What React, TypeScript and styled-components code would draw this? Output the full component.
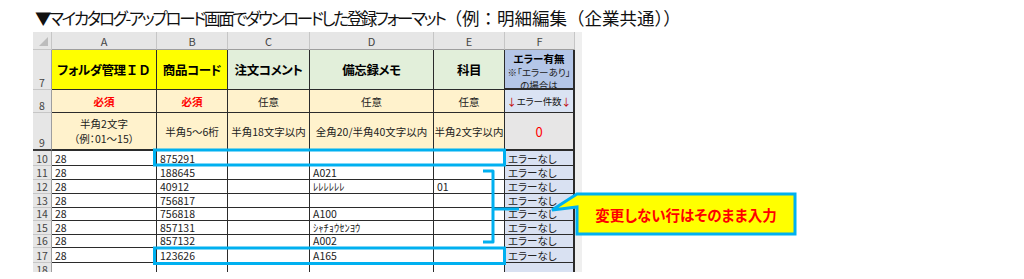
import styled, { createGlobalStyle } from "styled-components";

const GlobalStyle = createGlobalStyle`
  body {
    margin: 0;
    background: #ffffff;
    font-family: "Noto Sans CJK JP", "Noto Sans", sans-serif;
    font-feature-settings: "palt";
  }
`;

type Row = {
  n: number;
  a?: string;
  b?: string;
  c?: string;
  d?: string;
  e?: string;
  f?: string;
  h: number;
};

const rows: Row[] = [
  { n: 10, a: "28", b: "875291", f: "エラーなし", h: 15 },
  { n: 11, a: "28", b: "188645", d: "A021", f: "エラーなし", h: 14 },
  { n: 12, a: "28", b: "40912", d: "ﾚﾚﾚﾚﾚﾚ", e: "01", f: "エラーなし", h: 14 },
  { n: 13, a: "28", b: "756817", f: "エラーなし", h: 14 },
  { n: 14, a: "28", b: "756818", d: "A100", f: "エラーなし", h: 13 },
  { n: 15, a: "28", b: "857131", d: "ｼｬﾁｮｳｾﾝﾖｳ", f: "エラーなし", h: 14 },
  { n: 16, a: "28", b: "857132", d: "A002", f: "エラーなし", h: 13 },
  { n: 17, a: "28", b: "123626", d: "A165", f: "エラーなし", h: 15 },
  { n: 18, h: 14 },
];

const App: React.FC = () => {
  return (
    <>
      <GlobalStyle />
      <Page>
        <Title>
          <Kana>▼マイカタログ-アップロード画面でダウンロードした登録フォーマット</Kana>
          <Paren>（例：明細編集（企業共通））</Paren>
        </Title>
        <Sheet>
          <Grid $rows={rows.map((r) => r.h + "px").join(" ")}>
            <Corner>
              <CornerMark />
            </Corner>
            {["A", "B", "C", "D", "E", "F"].map((c) => (
              <ColHead key={c}>{c}</ColHead>
            ))}

            <RowHead>7</RowHead>
            <TitleCell $bg="#ffff00">
              フォルダ管理<Wide>ＩＤ</Wide>
            </TitleCell>
            <TitleCell $bg="#ffff00">商品コード</TitleCell>
            <TitleCell $bg="#e2efda">注文コメント</TitleCell>
            <TitleCell $bg="#e2efda">備忘録メモ</TitleCell>
            <TitleCell $bg="#e2efda">科目</TitleCell>
            <ErrorHead>
              <b>エラー有無</b>
              <span>※「エラーあり」</span>
              <span>の場合は</span>
            </ErrorHead>

            <RowHead>8</RowHead>
            <RuleCell $red>必須</RuleCell>
            <RuleCell $red>必須</RuleCell>
            <RuleCell>任意</RuleCell>
            <RuleCell>任意</RuleCell>
            <RuleCell>任意</RuleCell>
            <CountHead>
              <Arrow>↓</Arrow>エラー件数<Arrow>↓</Arrow>
            </CountHead>

            <RowHead $thick>9</RowHead>
            <NoteCell>
              半角2文字
              <br />
              （例：01～15）
            </NoteCell>
            <NoteCell>半角5～6桁</NoteCell>
            <NoteCell>半角18文字以内</NoteCell>
            <NoteCell>全角20/半角40文字以内</NoteCell>
            <NoteCell>半角2文字以内</NoteCell>
            <CountCell>0</CountCell>

            {rows.map((r) => (
              <Line key={r.n}>
                <RowHead>{r.n}</RowHead>
                <DataCell>{r.a}</DataCell>
                <DataCell>{r.b}</DataCell>
                <DataCell>{r.c}</DataCell>
                <DataCell>{r.d}</DataCell>
                <DataCell>{r.e}</DataCell>
                <StatusCell>{r.f}</StatusCell>
              </Line>
            ))}
          </Grid>
        </Sheet>

        <Overlay width="1024" height="279" viewBox="0 0 1024 279">
          <g fill="none" stroke="#00b0f0" strokeWidth="3">
            <rect x="154.5" y="150" width="350" height="15" />
            <rect x="154.5" y="248" width="350" height="15.5" />
            <path d="M483 171 H493 V242 H483" strokeLinejoin="round" />
            <path d="M493 209 H519" />
          </g>
          <path
            d="M577 194 H795 V234 H577 V207 L552 210 Z"
            fill="#ffff00"
            stroke="#00b0f0"
            strokeWidth="3"
            strokeLinejoin="miter"
          />
        </Overlay>
        <Callout>変更しない行はそのまま入力</Callout>
      </Page>
    </>
  );
};

export default App;

const Page = styled.div`
  position: relative;
  width: 1024px;
  height: 279px;
  overflow: hidden;
  padding-left: 33px;
  box-sizing: border-box;
`;

const Title = styled.h1`
  margin: 0;
  height: 32px;
  padding: 5px 0 0 2px;
  box-sizing: border-box;
  font-size: 16.5px;
  font-weight: 400;
  line-height: 25px;
  color: #111;
  white-space: nowrap;
`;

const Kana = styled.span`
  letter-spacing: -2.3px;
`;

const Wide = styled.span`
  font-feature-settings: normal;
  letter-spacing: 0;
`;

const Paren = styled(Wide)`
  font-size: 17.5px;
`;

const Sheet = styled.div`
  width: 549px;
  height: 240px;
  background: #efefef;
  overflow: hidden;
`;

const Grid = styled.div<{ $rows: string }>`
  display: grid;
  grid-template-columns: 19px 105px 71px 82px 124px 71px 70px;
  grid-template-rows: 18px 40px 23px 38px ${(p) => p.$rows};
  width: 542px;
  font-size: 10.5px;
  color: #111;
`;

const Line = styled.div`
  display: contents;
`;

const Corner = styled.div`
  position: relative;
  background: #e6e6e6;
  border-right: 1px solid #c6c6c6;
  border-bottom: 1px solid #c6c6c6;
`;

const CornerMark = styled.div`
  position: absolute;
  right: 3px;
  bottom: 3px;
  width: 0;
  height: 0;
  border-left: 9px solid transparent;
  border-bottom: 9px solid #bcbcbc;
`;

const ColHead = styled.div`
  display: flex;
  align-items: center;
  justify-content: center;
  background: #e6e6e6;
  border-right: 1px solid #c6c6c6;
  border-bottom: 1px solid #9e9e9e;
  color: #444;
  font-size: 11px;
`;

const RowHead = styled.div<{ $thick?: boolean }>`
  display: flex;
  align-items: flex-end;
  justify-content: center;
  overflow: hidden;
  background: #e6e6e6;
  border-right: 1px solid #9e9e9e;
  border-bottom: ${(p) => (p.$thick ? "2px solid #3a3a3a" : "1px solid #c6c6c6")};
  color: #444;
  font-size: 10.5px;
  line-height: 12px;
  box-sizing: border-box;
`;

const Cell = styled.div`
  box-sizing: border-box;
  min-width: 0;
  overflow: hidden;
  white-space: nowrap;
  background: #ffffff;
  border-right: 1px solid #2b2b2b;
  border-bottom: 1px solid #2b2b2b;
`;

const TitleCell = styled(Cell)<{ $bg: string }>`
  display: flex;
  align-items: center;
  justify-content: center;
  background: ${(p) => p.$bg};
  font-size: 12.5px;
  font-weight: 700;
  letter-spacing: -0.4px;
  color: #000;
`;

const ErrorHead = styled(Cell)`
  display: flex;
  flex-direction: column;
  align-items: center;
  padding-top: 2px;
  background: #b4c6e7;
  border-right-width: 2px;
  border-bottom-width: 2px;
  line-height: 13.5px;
  font-size: 9.5px;
  color: #222;

  b {
    font-size: 10.5px;
    color: #000;
  }
`;

const RuleCell = styled(Cell)<{ $red?: boolean }>`
  display: flex;
  align-items: center;
  justify-content: center;
  background: #fff2cc;
  font-weight: ${(p) => (p.$red ? 700 : 400)};
  color: ${(p) => (p.$red ? "#ff0000" : "#222")};
`;

const CountHead = styled(Cell)`
  display: flex;
  align-items: center;
  justify-content: center;
  background: #dae3f3;
  border-right-width: 2px;
  font-size: 9.5px;
  letter-spacing: -0.2px;
`;

const Arrow = styled.span`
  color: #c00000;
  font-size: 10px;
`;

const NoteCell = styled(Cell)`
  display: flex;
  align-items: center;
  justify-content: center;
  text-align: center;
  background: #fff2cc;
  border-bottom: 2px solid #2b2b2b;
  line-height: 15px;
  color: #222;
`;

const CountCell = styled(Cell)`
  display: flex;
  align-items: center;
  justify-content: center;
  background: #e7e6e6;
  border-right-width: 2px;
  border-bottom: 2px solid #2b2b2b;
  font-size: 13px;
  color: #ff0000;
`;

const DataCell = styled(Cell)`
  display: flex;
  align-items: flex-end;
  padding-left: 3px;
  font-size: 10.5px;
  line-height: 13px;
  color: #222;
`;

const StatusCell = styled(DataCell)`
  background: #d9e1f2;
  border-right-width: 2px;
`;

const Overlay = styled.svg`
  position: absolute;
  top: 0;
  left: 0;
  pointer-events: none;
`;

const Callout = styled.div`
  position: absolute;
  left: 577px;
  top: 194px;
  width: 218px;
  height: 40px;
  display: flex;
  align-items: center;
  justify-content: center;
  font-size: 14.5px;
  font-weight: 700;
  color: #ff0000;
`;
